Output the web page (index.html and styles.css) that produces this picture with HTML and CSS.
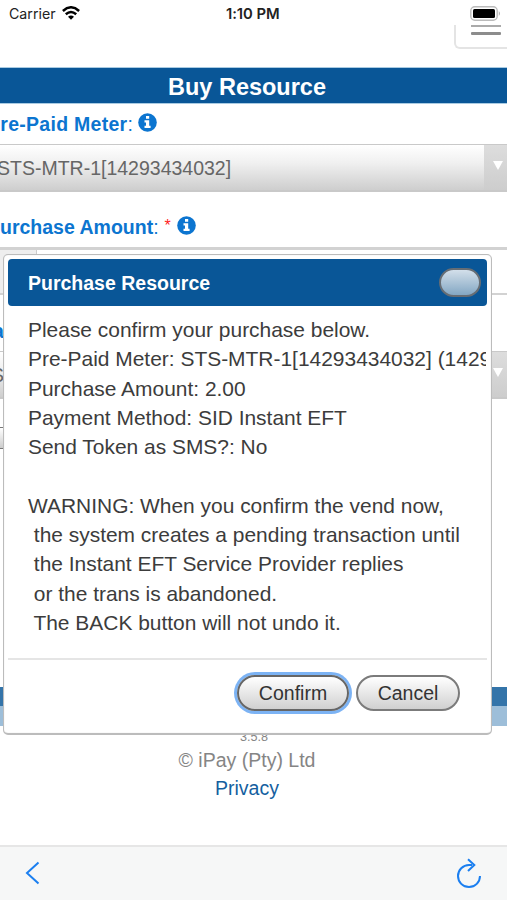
FILE: index.html
```html
<!DOCTYPE html>
<html lang="en">
<head>
<meta charset="utf-8">
<title>Buy Resource</title>
<link rel="stylesheet" href="styles.css">
</head>
<body>
<div class="screen">
  <div class="status">
    <div class="carrier">Carrier
      <svg class="wifi" width="18" height="14" viewBox="0 0 18 14"><g fill="none" stroke="#000" stroke-width="2.5"><path d="M.9 5Q9-2.4 17.1 5"/><path d="M3.8 8.2Q9 3.7 14.2 8.2"/></g><path d="M9 13.8 6 10.8Q9 8.3 12 10.8Z"/></svg>
    </div>
    <div class="clock">1:10 PM</div>
    <svg class="battery" width="31" height="16" viewBox="0 0 31 16"><rect x=".8" y=".8" width="26.4" height="13.4" rx="4" fill="#fff" stroke="#bbb" stroke-width="1.4"/><rect x="3" y="3" width="22" height="9" rx="1.5"/><path d="M28.8 5Q31 7.5 28.8 10Z" fill="#aaa"/></svg>
  </div>
  <div class="nav"><div class="menu"><i></i><i></i></div></div>
  <h1 class="heading">Buy Resource</h1>
  <div class="label meter"><b>Pre-Paid Meter</b><span>:</span><svg class="info" width="19" height="19" viewBox="0 0 19 19"><circle cx="9.5" cy="9.5" r="9.3"/><path d="M8 3h3.2v2.8H8zM6.5 7.3h4.7v5.5h1.4v2.1H6.5v-2.1H8V9.4H6.5z" fill="#fff"/></svg></div>
  <div class="select"><span>STS-MTR-1[14293434032]</span><div class="arrow"></div></div>
  <div class="label amount"><b>Purchase Amount</b><span>:</span><em>*</em><svg class="info" width="19" height="19" viewBox="0 0 19 19"><circle cx="9.5" cy="9.5" r="9.3"/><path d="M8 3h3.2v2.8H8zM6.5 7.3h4.7v5.5h1.4v2.1H6.5v-2.1H8V9.4H6.5z" fill="#fff"/></svg></div>
  <div class="input"><div class="prefix"></div></div>
  <div class="label method"><b>Pa</b></div>
  <div class="select second"><span>S</span><div class="arrow"></div></div>
  <div class="submit"></div>
  <div class="band"></div>
  <div class="footer">
    <small>3.5.8</small>
    <div>© iPay (Pty) Ltd</div>
    <a>Privacy</a>
  </div>
  <div class="toolbar">
    <svg width="16" height="24" viewBox="0 0 16 24"><path d="M13.5 1.5 2 12 13.5 22.5"/></svg>
    <svg width="28" height="32" viewBox="0 0 28 32"><path d="M17 7.1H14A11 11 0 1 0 25 18.1M13 1.3 19.3 7.1 13 13"/></svg>
  </div>

  <div class="dialog">
    <div class="title">Purchase Resource<span class="close"></span></div>
    <pre class="message">Please confirm your purchase below.
Pre-Paid Meter: STS-MTR-1[14293434032] (14293434032)
Purchase Amount: 2.00
Payment Method: SID Instant EFT
Send Token as SMS?: No

WARNING: When you confirm the vend now,
 the system creates a pending transaction until
 the Instant EFT Service Provider replies
 or the trans is abandoned.
 The BACK button will not undo it.</pre>
    <div class="actions"><button class="btn focus">Confirm</button><button class="btn cancel">Cancel</button></div>
  </div>
</div>
</body>
</html>
```

FILE: styles.css
```css
* { box-sizing: border-box; }
body { margin: 0; }
.screen {
  position: relative;
  display: flex;
  flex-direction: column;
  width: 507px;
  height: 900px;
  overflow: hidden;
  background: #fff;
  font: 19.5px/28px "Liberation Sans", Arial, sans-serif;
  color: #444;
}
.screen > * { flex-shrink: 0; }
.status {
  display: grid;
  grid-template-columns: 217px auto 1fr;
  height: 25px;
  padding: 5px 6px 0 9px;
  font: 14.2px/18px Inter, sans-serif;
  color: #222;
}
.carrier { display: flex; gap: 6px; }
.wifi { margin-top: 1px; }
.clock { font-weight: 600; font-size: 14.8px; }
.clock { letter-spacing: -.05px; }
.battery { justify-self: end; margin-top: 1px; }
.nav { display: flex; justify-content: flex-end; height: 42px; }
.menu {
  width: 53px;
  height: 24px;
  padding-left: 15px;
  border: solid #e4e4e4;
  border-width: 0 0 2px 2px;
  border-bottom-left-radius: 6px;
}
.menu i { display: block; width: 30px; height: 2px; margin-bottom: 5px; background: #aaa; }
.menu i + i { height: 3px; background: #8c8c8c; border-radius: 1px; }
.heading {
  height: 37px;
  margin: 0;
  border: solid #a9cbe2;
  border-width: 1px 0;
  background: #095697;
  color: #fff;
  font-size: 23.5px;
  line-height: 38px;
  text-align: center;
  padding-right: 13px;
}
.label { display: flex; align-items: center; color: #0c75d0; white-space: pre; }
.label em { color: #f22; font-style: normal; font-size: 16px; margin: -2px 6px 0 6px; }
.info { margin-top: -3px; fill: #0c75d0; }
.meter { height: 40px; margin-left: -13px; letter-spacing: .28px; }
.meter .info { margin-left: 5px; }
.amount { height: 55px; padding-top: 14px; margin-left: -13px; }
.method { height: 56px; padding-top: 16px; margin-left: -20px; }
.select {
  display: flex;
  justify-content: space-between;
  height: 48px;
  border: solid #c9c9c9;
  border-width: 1px 0 2px;
  background: linear-gradient(#fff, #f0f0f0 40%, #cecece);
  color: #666;
  line-height: 47px;
}
.select span { margin-left: -3px; }
.second span { margin-left: -9px; }
.arrow { width: 23px; background: linear-gradient(#ddd, #cdcdcd); padding: 16px 0 0 9px; }
.arrow::before {
  content: "";
  display: block;
  width: 0;
  border: 5px solid transparent;
  border-top: 9px solid #fff;
  border-bottom: 0;
}
.input { height: 48px; border: solid #d2d2d2; border-width: 3px 0 2px; background: #fff; }
.prefix { width: 37px; height: 43px; background: #eee; border-right: 1px solid #ccc; }
.submit { width: 8px; height: 22px; margin-top: 28px; border: solid #777; border-width: 1px 0; background: linear-gradient(#fff, #ccc); }
.band { height: 39px; margin-top: 238px; background: linear-gradient(#3474a9 50%, #9dbed9 50%); }
.footer { text-align: center; color: #858585; height: 119px; padding: 2px 13px 0 0; }
.footer small { display: block; font-size: 12.6px; line-height: 18px; margin-right: -14px; }
.footer a { display: block; color: #155f9f; }
.toolbar {
  display: flex;
  justify-content: space-between;
  height: 55px;
  padding: 11px 24px 0 25px;
  border-top: 2px solid #e6e6e6;
  background: #f6f7f7;
}
.toolbar svg { fill: none; stroke: #1b7ff0; stroke-width: 2; }
.toolbar svg:first-child { margin-top: 3px; }
.dialog {
  position: absolute;
  left: 3px;
  top: 254px;
  width: 489px;
  height: 481px;
  padding: 4px;
  border: 1px solid #bcbcbc;
  border-bottom-width: 2px;
  border-radius: 5px;
  background: #fff;
  box-shadow: inset 0 0 1px #ccc;
}
.title {
  display: flex;
  justify-content: space-between;
  align-items: center;
  height: 47px;
  padding: 0 6px 0 20px;
  border-radius: 4px;
  background: #095697;
  color: #fff;
  font-weight: bold;
}
.close {
  width: 42px;
  height: 29px;
  margin-top: -1px;
  border: 2px solid #666d74;
  border-radius: 15px;
  background: linear-gradient(#d3dfea, #83a7c3);
}
.message {
  margin: 9px 1px 0 0;
  padding-left: 20px;
  height: 343px;
  overflow: hidden;
  font: 20.94px/29.3px "Liberation Sans", Arial, sans-serif;
  color: #3c3c3c;
}
.actions {
  display: flex;
  justify-content: flex-end;
  gap: 7px;
  padding: 15px 27px 0 0;
  border-top: 2px solid #e5e5e5;
}
.btn {
  height: 36px;
  border: 2px solid #666;
  border-radius: 18px;
  padding: 0;
  background: linear-gradient(#fff, #d0d0d0);
  font: 19.5px "Liberation Sans", Arial, sans-serif;
  color: #333;
  width: 112px;
}
.cancel { width: 104px; border-color: #7b7b7b; }
.focus { box-shadow: 0 0 0 3px #7cb3f4; }
```
